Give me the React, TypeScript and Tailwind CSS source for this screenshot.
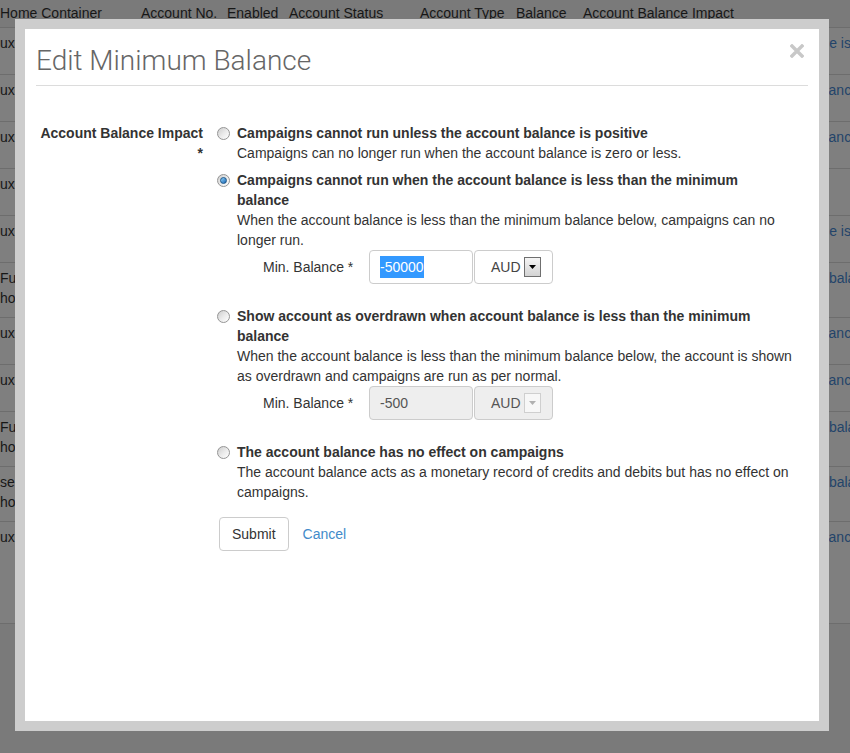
import React from 'react';

const impactBase = 'Campaigns cannot run below minimum balance';

// shift only lines the text up with the slice that peeks out beside the modal
const tableRows = [
  { h: 'h-[47px]', left: ['ux-demo-container'], right: impactBase + ' is positive', shift: '-ml-[41px]' },
  { h: 'h-[47px]', left: ['ux-demo-container'], right: impactBase, shift: '-ml-[19px]' },
  { h: 'h-[47px]', left: ['ux-demo-container'], right: impactBase, shift: '-ml-[19px]' },
  { h: 'h-[47px]', left: ['ux-demo-container'], right: 'No effect on campaigns', shift: '' },
  { h: 'h-[47px]', left: ['ux-demo-container'], right: impactBase + ' is positive', shift: '-ml-[41px]' },
  { h: 'h-[55px]', left: ['Full Service', 'home container'], right: impactBase, shift: '' },
  { h: 'h-[47px]', left: ['ux-demo-container'], right: impactBase, shift: '-ml-[19px]' },
  { h: 'h-[47px]', left: ['ux-demo-container'], right: impactBase, shift: '-ml-[19px]' },
  { h: 'h-[55px]', left: ['Full Service', 'home container'], right: impactBase, shift: '' },
  { h: 'h-[55px]', left: ['self serve', 'home container'], right: impactBase, shift: '' },
  { h: 'h-[103px]', left: ['ux-demo-container'], right: impactBase, shift: '-ml-[19px]' },
];

function BackgroundTable() {
  return (
    <div className="text-[14px] text-[#171717]">
      <div className="flex h-[27px] items-center whitespace-nowrap">
        <span className="w-[141px] shrink-0">Home Container</span>
        <span className="w-[86px] shrink-0">Account No.</span>
        <span className="w-[62px] shrink-0">Enabled</span>
        <span className="w-[131px] shrink-0">Account Status</span>
        <span className="w-[96px] shrink-0">Account Type</span>
        <span className="w-[67px] shrink-0">Balance</span>
        <span>Account Balance Impact</span>
      </div>
      {tableRows.map((row, i) => (
        <div
          key={i}
          className={`flex ${row.h} border-t border-[#6d6d6d] bg-[#7f7f7f] pt-[5px] leading-[20px] whitespace-nowrap ${
            i === tableRows.length - 1 ? 'border-b' : ''
          }`}
        >
          <div className="w-[583px] shrink-0">
            {row.left.map((t) => (
              <div key={t}>{t}</div>
            ))}
          </div>
          <div className={`text-[#23446a] ${row.shift}`}>{row.right}</div>
        </div>
      ))}
    </div>
  );
}

function Radio({ checked }: { checked?: boolean }) {
  return (
    <span className="mt-[4px] flex h-[13px] w-[13px] shrink-0 items-center justify-center rounded-full border border-[#959595] bg-linear-to-br from-[#cdcdcd] via-[#eaeaea] to-white">
      {checked && (
        <span className="h-[7px] w-[7px] rounded-full border border-[#1b5588] bg-linear-to-br from-[#8fd3fa] to-[#1466b3]" />
      )}
    </span>
  );
}

function SelectArrow({ disabled }: { disabled?: boolean }) {
  return (
    <span
      className={`flex h-[20px] w-[17px] items-center justify-center border ${
        disabled ? 'border-[#cfcfcf] bg-[#f7f7f7]' : 'border-[#6f6f6f] bg-linear-to-b from-[#f5f5f5] to-[#d3d3d3]'
      }`}
    >
      <svg width="7" height="4" viewBox="0 0 7 4">
        <path d="M0 0h7L3.5 4z" fill={disabled ? '#b0b0b0' : '#000'} />
      </svg>
    </span>
  );
}

function MinBalance({ value, disabled }: { value: string; disabled?: boolean }) {
  return (
    <div className="mb-[15px] ml-[26px] flex items-center">
      <span className="w-[106px] text-[#333]">Min. Balance *</span>
      <div
        className={`flex h-[34px] w-[104px] items-center rounded-[4px] border border-[#cccccc] pl-[10px] ${
          disabled ? 'bg-[#eeeeee] text-[#555]' : 'bg-white'
        }`}
      >
        {disabled ? (
          <span>{value}</span>
        ) : (
          <span className="bg-[#3399ff] leading-[22px] text-white">{value}</span>
        )}
      </div>
      <div
        className={`ml-[1px] flex h-[34px] w-[79px] items-center rounded-[4px] border border-[#cccccc] pl-[16px] ${
          disabled ? 'bg-[#eeeeee] text-[#555]' : 'bg-white text-[#444]'
        }`}
      >
        <span>AUD</span>
        <span className="ml-[3px]">
          <SelectArrow disabled={disabled} />
        </span>
      </div>
    </div>
  );
}

function Option({
  checked,
  title,
  desc,
  children,
}: {
  checked?: boolean;
  title: React.ReactNode;
  desc: React.ReactNode;
  children?: React.ReactNode;
}) {
  return (
    <div className="flex items-start">
      <Radio checked={checked} />
      <div className="ml-[7px] w-[571px]">
        <div className="font-bold text-[#333]">{title}</div>
        <div className="text-[#333]">{desc}</div>
        {children}
      </div>
    </div>
  );
}

export default function App() {
  return (
    <div className="relative h-[753px] w-[850px] overflow-hidden bg-[#7a7a7a] font-['Liberation_Sans',Arial,sans-serif]">
      <BackgroundTable />

      <div className="absolute top-[19px] left-[15px] h-[712px] w-[814px] border-[10px] border-[#cdcdcd] bg-white text-[14px] leading-[20px]">
        <div className="mx-[11px] flex items-start justify-between border-b border-[#dcdcdc] pt-[15px] pb-[8px]">
          <h2 className="font-['Roboto',sans-serif] text-[28px] leading-[33px] font-light text-[#666]">
            Edit Minimum Balance
          </h2>
          <button className="mr-[4px]" aria-label="Close">
            <svg width="14" height="14" viewBox="0 0 14 14">
              <path d="M2 2L12 12M12 2L2 12" stroke="#c8c8c8" strokeWidth="3.4" strokeLinecap="square" />
            </svg>
          </button>
        </div>

        <div className="flex px-[10px] pt-[37px]">
          <label className="w-[168px] text-right font-bold text-[#333]">Account Balance Impact *</label>
          <div className="ml-[14px]">
            <div className="flex flex-col gap-[7px]">
              <Option
                title="Campaigns cannot run unless the account balance is positive"
                desc="Campaigns can no longer run when the account balance is zero or less."
              />
              <Option
                checked
                title={
                  <>
                    Campaigns cannot run when the account balance is less than the minimum
                    <br />
                    balance
                  </>
                }
                desc="When the account balance is less than the minimum balance below, campaigns can no longer run."
              >
                <MinBalance value="-50000" />
              </Option>
              <Option
                title={
                  <>
                    Show account as overdrawn when account balance is less than the minimum
                    <br />
                    balance
                  </>
                }
                desc="When the account balance is less than the minimum balance below, the account is shown as overdrawn and campaigns are run as per normal."
              >
                <MinBalance value="-500" disabled />
              </Option>
              <Option
                title="The account balance has no effect on campaigns"
                desc="The account balance acts as a monetary record of credits and debits but has no effect on campaigns."
              />
            </div>
            <div className="mt-[15px] ml-[2px] flex items-center">
              <button className="h-[34px] rounded-[4px] border border-[#cccccc] bg-white px-[12px] text-[#333]">
                Submit
              </button>
              <a href="#" className="ml-[14px] text-[#428bca]">
                Cancel
              </a>
            </div>
          </div>
        </div>
      </div>
    </div>
  );
}
